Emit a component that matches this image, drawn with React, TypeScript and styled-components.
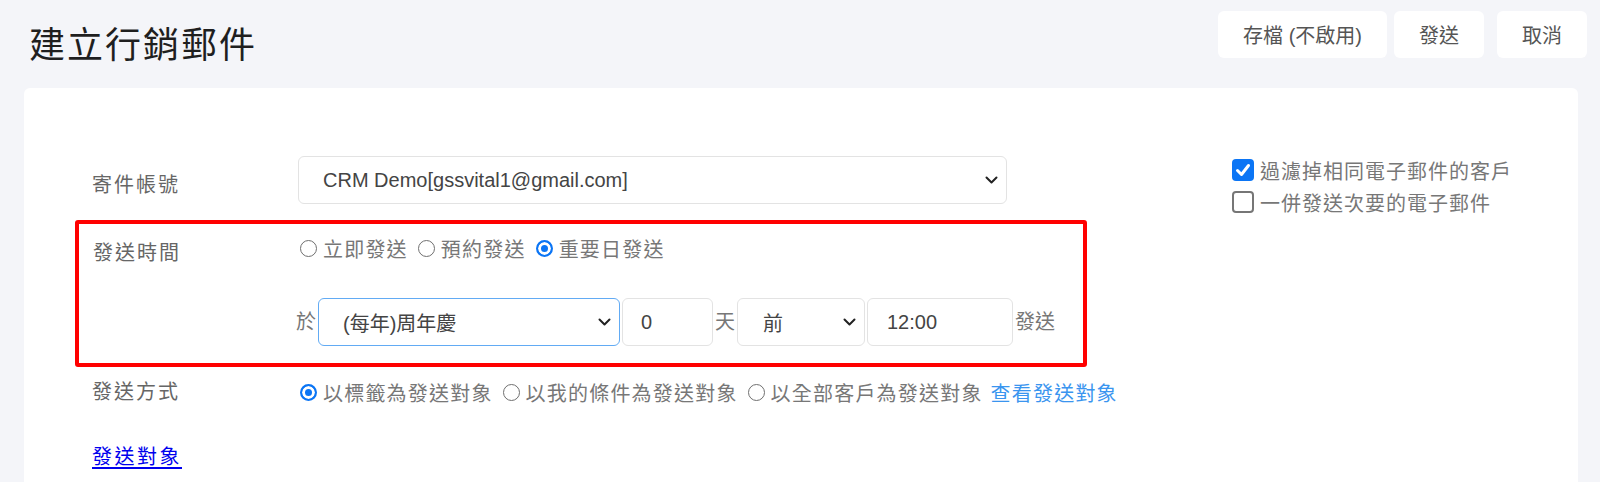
import React from "react";
import styled, { createGlobalStyle } from "styled-components";

const GlobalStyle = createGlobalStyle`
  html, body {
    margin: 0;
    padding: 0;
    background: #f4f5f9;
  }
  body {
    font-family: "Liberation Sans", "Noto Sans CJK TC", sans-serif;
    color: #555;
  }
  * { box-sizing: border-box; }
`;

const Page = styled.div`
  width: 1600px;
  height: 482px;
  overflow: hidden;
  background: #f4f5f9;
`;

const Header = styled.header`
  display: flex;
  justify-content: space-between;
  align-items: flex-start;
  height: 88px;
  padding: 0 13px 0 29px;
`;

const Title = styled.h1`
  margin: 0;
  padding-top: 26px;
  font-size: 36px;
  line-height: 40px;
  font-weight: 400;
  letter-spacing: 2px;
  color: #1f1f1f;
`;

const Actions = styled.div`
  display: flex;
  margin-top: 11px;
`;

const ActionButton = styled.button<{ $gap?: number }>`
  height: 47px;
  padding: 0 25px;
  margin-left: ${(p) => p.$gap ?? 0}px;
  border: none;
  border-radius: 6px;
  background: #fff;
  color: #555;
  font-family: "Liberation Sans", "Noto Sans CJK TC", sans-serif;
  font-size: 20px;
  cursor: pointer;
`;

const Card = styled.main`
  margin: 0 22px 0 24px;
  min-height: 420px;
  padding: 68px 0 40px 51px;
  background: #fff;
  border-radius: 6px 6px 0 0;
  display: flex;
  align-items: flex-start;
`;

const FormColumn = styled.section`
  width: 1012px;
  flex: none;
  display: flex;
  flex-direction: column;
`;

const Row = styled.div<{ $mt?: number }>`
  display: flex;
  align-items: flex-start;
  padding-left: 17px;
  margin-top: ${(p) => p.$mt ?? 0}px;
`;

const Highlight = styled.div`
  display: flex;
  align-items: flex-start;
  margin-top: 16px;
  padding: 0 0 17px 14px;
  border: 4px solid #ff0000;
  border-radius: 3px;
`;

const Label = styled.div<{ $pt?: number; $w?: number }>`
  flex: 0 0 ${(p) => p.$w ?? 206}px;
  padding-top: ${(p) => p.$pt ?? 0}px;
  font-size: 20px;
  line-height: 30px;
  letter-spacing: 2px;
  color: #666;
`;

const Controls = styled.div<{ $pt?: number }>`
  display: flex;
  flex-direction: column;
  padding-top: ${(p) => p.$pt ?? 0}px;
`;

const SelectBox = styled.div<{ $w: number; $focus?: boolean; $pl?: number }>`
  width: ${(p) => p.$w}px;
  height: 48px;
  flex: none;
  display: flex;
  align-items: center;
  justify-content: space-between;
  padding: 0 8px 0 ${(p) => p.$pl ?? 24}px;
  border: 1px solid ${(p) => (p.$focus ? "#62abf4" : "#e3e3e3")};
  border-radius: 6px;
  background: #fff;
  font-size: 20px;
  color: #444;
  white-space: nowrap;
`;

const InputBox = styled.div<{ $w: number; $pl: number }>`
  width: ${(p) => p.$w}px;
  height: 48px;
  flex: none;
  display: flex;
  align-items: center;
  padding-left: ${(p) => p.$pl}px;
  border: 1px solid #e3e3e3;
  border-radius: 6px;
  background: #fff;
  font-size: 20px;
  color: #444;
`;

const ScheduleLine = styled.div`
  display: flex;
  align-items: center;
  gap: 2px;
  margin-top: 35px;
  margin-left: -2px;
  height: 48px;
`;

const InlineText = styled.span`
  font-size: 20px;
  line-height: 30px;
  color: #777;
  white-space: nowrap;
`;

const OptionLine = styled.div`
  display: flex;
  align-items: center;
  height: 30px;
  font-size: 20px;
  letter-spacing: 1.2px;
  color: #777;
  white-space: nowrap;
`;

const Option = styled.label`
  display: flex;
  align-items: center;
  margin-right: 8px;
  cursor: pointer;
`;

const RadioDot = styled.span<{ $on?: boolean }>`
  width: 17px;
  height: 17px;
  flex: none;
  margin: 0 6px 0 2px;
  border-radius: 50%;
  border: ${(p) => (p.$on ? "2px solid #0b75f5" : "1.5px solid #6f6f6f")};
  background: ${(p) => (p.$on ? "#0b75f5" : "#fff")};
  box-shadow: ${(p) => (p.$on ? "inset 0 0 0 3px #fff" : "none")};
`;

const InfoLink = styled.span`
  color: #3a95ef;
  letter-spacing: 1.2px;
  cursor: pointer;
`;

const TargetLink = styled.a`
  font-size: 20px;
  line-height: 30px;
  letter-spacing: 2.5px;
  color: #0000ee;
  text-decoration: underline;
  text-underline-offset: 3px;
`;

const SideColumn = styled.aside`
  margin-left: 145px;
  margin-top: -2px;
  display: flex;
  flex-direction: column;
`;

const CheckRow = styled.label`
  display: flex;
  align-items: center;
  height: 32px;
  font-size: 20px;
  letter-spacing: 1px;
  color: #777;
  white-space: nowrap;
  cursor: pointer;
`;

const CheckBox = styled.span<{ $on?: boolean }>`
  width: 22px;
  height: 22px;
  flex: none;
  margin-right: 6px;
  display: flex;
  align-items: center;
  justify-content: center;
  border-radius: 4px;
  background: ${(p) => (p.$on ? "#0b75f5" : "#fff")};
  border: ${(p) => (p.$on ? "none" : "2px solid #767676")};
`;

const Chevron = () => (
  <svg width="13" height="8" viewBox="0 0 13 8" aria-hidden>
    <path d="M1.5 1.5 L6.5 6.5 L11.5 1.5" fill="none" stroke="#222" strokeWidth="2" strokeLinecap="round" strokeLinejoin="round" />
  </svg>
);

const Check = () => (
  <svg width="18" height="18" viewBox="0 0 18 18" aria-hidden>
    <path d="M3.5 9.5 L7.5 13.5 L14.5 4.5" fill="none" stroke="#fff" strokeWidth="3" strokeLinecap="round" strokeLinejoin="round" />
  </svg>
);

const Radio = ({ on, text }: { on?: boolean; text: string }) => (
  <Option>
    <RadioDot $on={on} />
    {text}
  </Option>
);

export default function App() {
  return (
    <Page>
      <GlobalStyle />
      <Header>
        <Title>建立行銷郵件</Title>
        <Actions>
          <ActionButton>存檔 (不啟用)</ActionButton>
          <ActionButton $gap={7}>發送</ActionButton>
          <ActionButton $gap={13}>取消</ActionButton>
        </Actions>
      </Header>
      <Card>
        <FormColumn>
          <Row>
            <Label $pt={14}>寄件帳號</Label>
            <SelectBox $w={709}>
              <span>CRM Demo[gssvital1@gmail.com]</span>
              <Chevron />
            </SelectBox>
          </Row>
          <Highlight>
            <Label $w={205} $pt={14}>發送時間</Label>
            <Controls $pt={9}>
              <OptionLine>
                <Radio text="立即發送" />
                <Radio text="預約發送" />
                <Radio on text="重要日發送" />
              </OptionLine>
              <ScheduleLine>
                <InlineText>於</InlineText>
                <SelectBox $w={302} $focus>
                  <span>(每年)周年慶</span>
                  <Chevron />
                </SelectBox>
                <InputBox $w={91} $pl={18}>0</InputBox>
                <InlineText>天</InlineText>
                <SelectBox $w={128} $pl={25}>
                  <span>前</span>
                  <Chevron />
                </SelectBox>
                <InputBox $w={146} $pl={19}>12:00</InputBox>
                <InlineText>發送</InlineText>
              </ScheduleLine>
            </Controls>
          </Highlight>
          <Row $mt={10}>
            <Label>發送方式</Label>
            <OptionLine>
              <Radio on text="以標籤為發送對象" />
              <Radio text="以我的條件為發送對象" />
              <Radio text="以全部客戶為發送對象" />
              <InfoLink>查看發送對象</InfoLink>
            </OptionLine>
          </Row>
          <Row $mt={35}>
            <TargetLink href="#">發送對象</TargetLink>
          </Row>
        </FormColumn>
        <SideColumn>
          <CheckRow>
            <CheckBox $on>
              <Check />
            </CheckBox>
            過濾掉相同電子郵件的客戶
          </CheckRow>
          <CheckRow>
            <CheckBox />
            一併發送次要的電子郵件
          </CheckRow>
        </SideColumn>
      </Card>
    </Page>
  );
}
